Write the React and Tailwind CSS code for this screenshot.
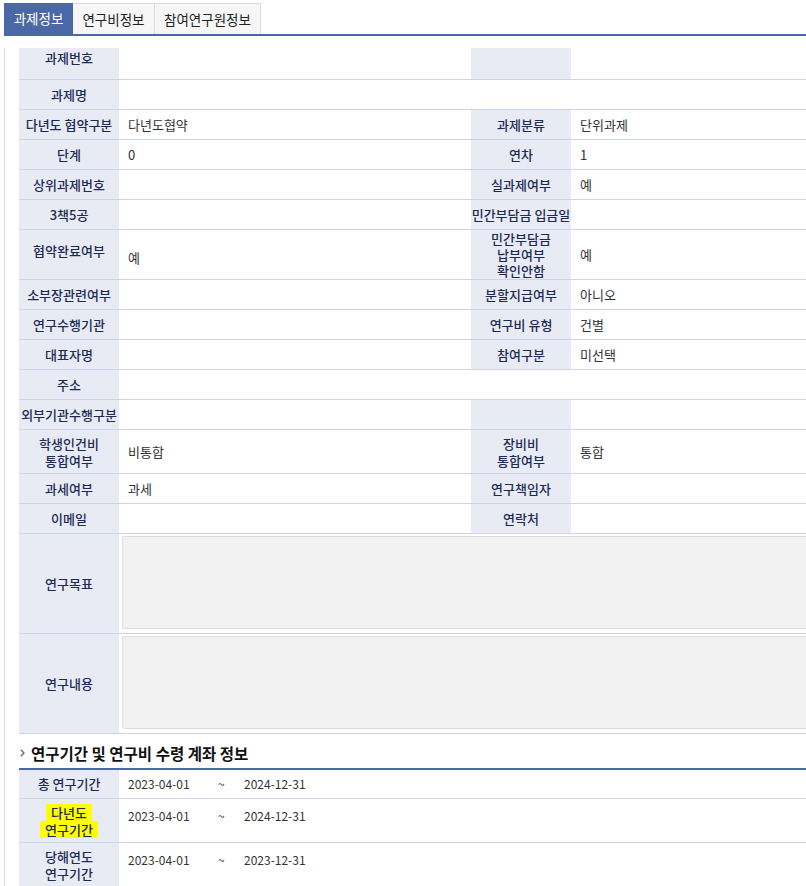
import React from "react";

const F = { fontFamily: '"Noto Sans CJK KR", "Noto Sans", sans-serif' };

function L({ children, className = "" }) {
  return (
    <div className={"bg-[#e8ebf3] border-b border-[#cbd5e8] flex items-center justify-center text-center text-[13px] leading-[16px] font-medium text-[#1c2b55] whitespace-nowrap " + className}>
      <div>{children}</div>
    </div>
  );
}
function V({ children, className = "", span = false }) {
  return (
    <div className={"border-b border-[#cbd5e8] flex items-center pl-[9px] text-[13px] leading-[16px] text-[#333] " + (span ? "col-span-3 " : "") + className}>
      {children}
    </div>
  );
}

function Row4({ a, b, c, d, h = "h-[30px]" }) {
  return (
    <>
      <L className={h}>{a}</L>
      <V className={h}>{b}</V>
      <L className={h}>{c}</L>
      <V className={h}>{d}</V>
    </>
  );
}

function Lines({ items, lh = "leading-[17px]" }) {
  return (
    <div className="flex flex-col items-center">
      {items.map((t, i) => (
        <span key={i} className={"block " + lh}>{t}</span>
      ))}
    </div>
  );
}

export default function App() {
  return (
    <div style={F} className="w-[806px] h-[886px] overflow-hidden bg-white relative">
      {/* tabs */}
      <div className="pt-[3px] pl-[4px] flex items-end">
        <div className="w-[69px] h-[31px] bg-[#4b68a6] text-white text-[13.5px] flex items-center justify-center">과제정보</div>
        <div className="w-[82px] h-[31px] bg-[#f6f6f6] border-t border-r border-[#dcdcdc] text-[#222] text-[13.5px] flex items-center justify-center">연구비정보</div>
        <div className="w-[106px] h-[31px] bg-[#f6f6f6] border-t border-r border-[#dcdcdc] text-[#222] text-[13.5px] flex items-center justify-center">참여연구원정보</div>
      </div>
      <div className="ml-[4px] h-[2px] bg-[#4b68a6]" />
      <div className="ml-[4px] mt-[12px] border-l border-[#dedede] pl-[14px] h-[900px]">
        <div className="w-[900px] grid grid-cols-[100px_352px_100px_348px]">
          <L className="h-[32px] !items-start pt-[2px]">과제번호</L>
          <V className="h-[32px]"></V>
          <L className="h-[32px]"></L>
          <V className="h-[32px]"></V>

          <L className="h-[30px]">과제명</L>
          <V span className="h-[30px]"></V>

          <Row4 a="다년도 협약구분" b="다년도협약" c="과제분류" d="단위과제" />
          <Row4 a="단계" b="0" c="연차" d="1" />
          <Row4 a="상위과제번호" b="" c="실과제여부" d="예" />
          <Row4 a="3책5공" b="" c="민간부담금 입금일" d="" />
          <L className="h-[50px]"><span className="relative top-[-4px]">협약완료여부</span></L>
          <V className="h-[50px]"><span className="relative top-[3px]">예</span></V>
          <L className="h-[50px]"><Lines items={["민간부담금", "납부여부", "확인안함"]} lh="leading-[16px]" /></L>
          <V className="h-[50px]">예</V>
          <Row4 a="소부장관련여부" b="" c="분할지급여부" d="아니오" />
          <Row4 a="연구수행기관" b="" c="연구비 유형" d="건별" />
          <Row4 a="대표자명" b="" c="참여구분" d="미선택" />
          <L className="h-[30px]">주소</L>
          <V span className="h-[30px]"></V>
          <Row4 a="외부기관수행구분" b="" c="" d="" />
          <Row4 h="h-[44px]" a={<Lines items={["학생인건비", "통합여부"]} />} b="비통합" c={<Lines items={["장비비", "통합여부"]} />} d="통합" />
          <Row4 a="과세여부" b="과세" c="연구책임자" d="" />
          <Row4 a="이메일" b="" c="연락처" d="" />

          <L className="h-[100px]">연구목표</L>
          <div className="col-span-3 h-[100px] border-b border-[#cbd5e8] pt-[2px] pl-[3px]">
            <div className="h-[93px] bg-[#f2f2f2] border border-[#dcdcdc] rounded-[2px]" />
          </div>
          <L className="h-[100px]">연구내용</L>
          <div className="col-span-3 h-[100px] border-b border-[#cbd5e8] pt-[2px] pl-[3px]">
            <div className="h-[93px] bg-[#f2f2f2] border border-[#dcdcdc] rounded-[2px]" />
          </div>
        </div>

        {/* section heading */}
        <div className="flex items-center h-[34px] pt-[4px]">
          <svg width="5" height="8" viewBox="0 0 5 8" className="ml-[1px] mr-[6px]">
            <path d="M0.8 0.8 L4 4 L0.8 7.2" fill="none" stroke="#4f6a88" strokeWidth="1.3" />
          </svg>
          <span className="text-[15.5px] font-bold text-[#111] leading-[20px]">연구기간 및 연구비 수령 계좌 정보</span>
        </div>
        <div className="w-[900px] h-[2px] bg-[#4b68a6]" />
        <div className="w-[900px] grid grid-cols-[100px_800px]">
          <L className="h-[29px]">총 연구기간</L>
          <div className="h-[29px] border-b border-[#cbd5e8] flex items-center pl-[9px] text-[12px] text-[#333]">
            <span className="w-[90px]">2023-04-01</span>
            <span className="w-[26px]">~</span>
            <span>2024-12-31</span>
          </div>
          <L className="h-[44px]">
            <div className="flex flex-col items-center">
              <span className="block bg-[#ffff00] leading-[17px] px-[5px]">다년도</span>
              <span className="block bg-[#ffff00] leading-[17px] px-[5px]">연구기간</span>
            </div>
          </L>
          <div className="h-[44px] border-b border-[#cbd5e8] flex items-start pt-[8px] pl-[9px] text-[12px] text-[#333]">
            <span className="w-[90px]">2023-04-01</span>
            <span className="w-[26px]">~</span>
            <span>2024-12-31</span>
          </div>
          <L className="h-[44px]"><Lines items={["당해연도", "연구기간"]} /></L>
          <div className="h-[44px] border-b border-[#cbd5e8] flex items-start pt-[8px] pl-[9px] text-[12px] text-[#333]">
            <span className="w-[90px]">2023-04-01</span>
            <span className="w-[26px]">~</span>
            <span>2023-12-31</span>
          </div>
        </div>
      </div>
    </div>
  );
}
